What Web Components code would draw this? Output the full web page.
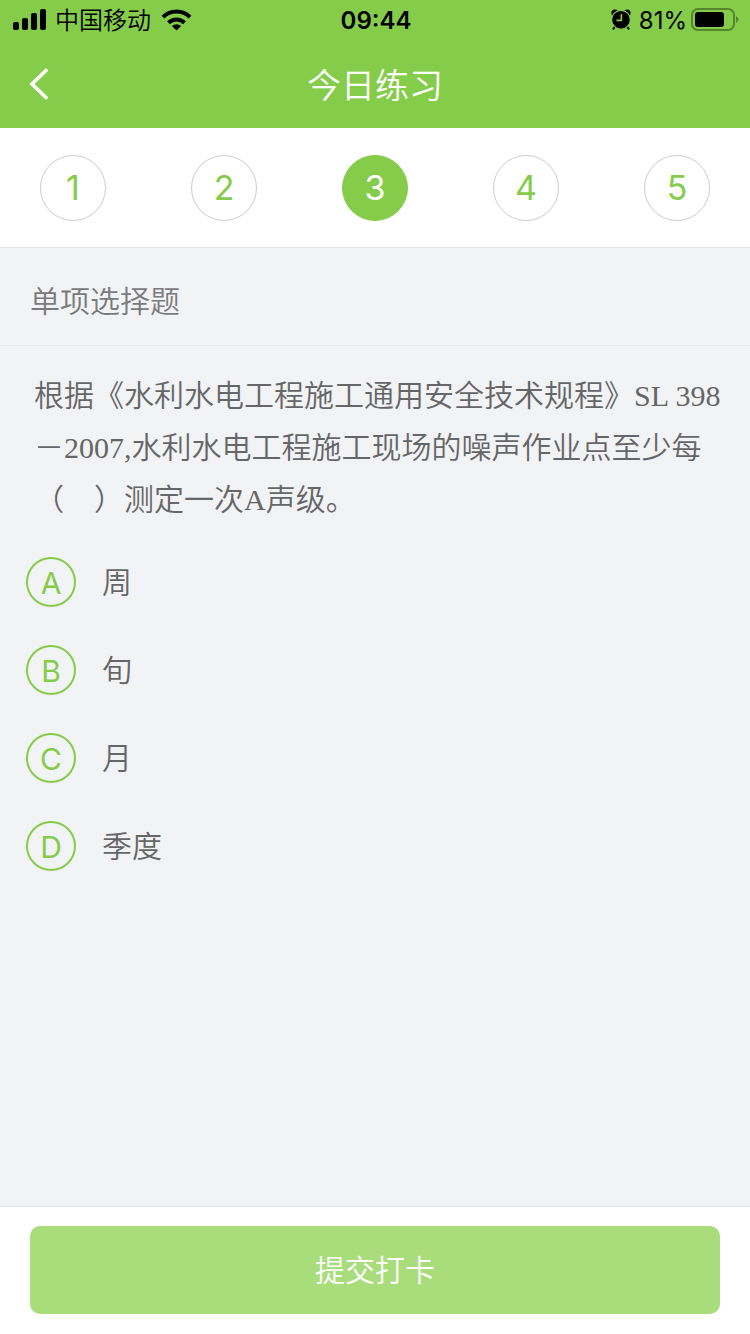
<!DOCTYPE html>
<html lang="zh-CN">
<head>
<meta charset="utf-8">
<meta name="viewport" content="width=device-width, initial-scale=1">
<title>今日练习</title>
<style>
  html { --green: #86cc4b; --grey: #656668; }
  body { margin: 0; font-family: Inter, "Noto Sans CJK SC", sans-serif; font-weight: 350; color: var(--grey); }
</style>
</head>
<body>
<practice-page></practice-page>

<script>
function define(name, html, setup) {
  const template = document.createElement("template");
  template.innerHTML = html;
  customElements.define(name, class extends HTMLElement {
    connectedCallback() {
      if (this.shadowRoot) return;
      const root = this.attachShadow({ mode: "open" });
      root.append(template.content.cloneNode(true));
      if (setup) setup(this, root);
    }
  });
}

define("status-bar", `
<style>
  :host { display: grid; grid-template-columns: 1fr auto 1fr; align-items: center; height: 40px; padding: 0 11px 0 13px; background: var(--green); color: #000; font-size: 24px; line-height: 40px; }
  svg { display: block; flex: none; }
  .side { display: flex; align-items: center; }
  .left { gap: 9px; }
  .right { justify-content: flex-end; gap: 4px; font-weight: 400; }
  .alarm { margin-right: 4px; }
  span, time { padding-top: 2px; line-height: 38px; }
  time { font-weight: 600; }
</style>
<div class="side left">
  <svg width="33" height="22" viewBox="0 0 33 22" role="img" aria-label="信号">
    <rect x="0" y="13" width="6" height="8" rx="2"/><rect x="9" y="9" width="6" height="12" rx="2"/><rect x="18" y="4" width="6" height="17" rx="2"/><rect x="27" y="0" width="6" height="21" rx="2"/>
  </svg>
  <span>中国移动</span>
  <svg width="32" height="22" viewBox="0 0 32 22" role="img" aria-label="无线网络">
    <g fill="none" stroke="#000" stroke-width="4"><path d="M3 8.2A19 19 0 0 1 30 8.2"/><path d="M8.5 13.8A11.5 11.5 0 0 1 24.5 13.8"/></g>
    <path d="M16.5 21.5L11.9 17A6.6 6.6 0 0 1 21.1 17Z"/>
  </svg>
</div>
<time>09:44</time>
<div class="side right">
  <svg class="alarm" width="20" height="22" viewBox="0 0 20 22" role="img" aria-label="闹钟">
    <circle cx="4" cy="4" r="3.6"/><circle cx="16" cy="4" r="3.6"/>
    <path d="M4 17.5L2.4 19.8M16 17.5L17.6 19.8" stroke="#000" stroke-width="2" stroke-linecap="round"/>
    <circle cx="10" cy="10.8" r="9.4" stroke="#86cc4b" stroke-width="1.2"/>
    <path d="M10.4 5V11.4H5.5" fill="none" stroke="#86cc4b" stroke-width="1.6"/>
  </svg>
  <span>81%</span>
  <svg width="48" height="24" viewBox="0 0 48 24" role="img" aria-label="电池">
    <rect x="1" y="1" width="42" height="21" rx="6" fill="none" stroke="#55862d" stroke-width="2"/>
    <rect x="4" y="4" width="29" height="15" rx="3"/>
    <path d="M45 8Q50 11.5 45 15Z" fill="#55862d"/>
  </svg>
</div>`);

define("nav-bar", `
<style>
  :host { display: grid; grid-template-columns: 78px 1fr 78px; align-items: center; height: 88px; background: var(--green); color: #fff; }
  button { display: grid; place-items: center; height: 88px; padding: 0; border: 0; background: none; color: inherit; }
  h1 { margin: 0; padding-top: 4px; font-size: 34px; line-height: 48px; font-weight: inherit; text-align: center; }
</style>
<button type="button" aria-label="返回">
  <svg width="20" height="32" viewBox="0 0 20 32"><path d="M17 2.5L3 16L17 29.5" fill="none" stroke="#fff" stroke-width="3.6" stroke-linecap="round"/></svg>
</button>
<h1><slot></slot></h1>`);

define("question-steps", `
<style>
  :host { display: flex; justify-content: space-between; padding: 27px 40px 26px; border-bottom: 1px solid #e3e4e5; background: #fff; }
  button { box-sizing: border-box; width: 66px; height: 66px; padding: 0; border: 1px solid #ccc; border-radius: 50%; background: #fff; color: var(--green); font: 400 34px/64px Inter, sans-serif; }
  button[aria-current] { border-color: var(--green); background: var(--green); color: #fff; }
</style>`, (host, root) => {
  const count = Number(host.getAttribute("count"));
  for (let i = 1; i <= count; i++) {
    const button = document.createElement("button");
    button.type = "button";
    button.textContent = i;
    if (String(i) === host.getAttribute("current")) button.setAttribute("aria-current", "step");
    root.append(button);
  }
});

define("section-title", `
<style>
  :host { display: block; padding: 29px 30px 20px; border-bottom: 1px solid #e8e9eb; color: #7a7b7d; }
  h2 { margin: 0; font-size: 30px; line-height: 48px; font-weight: inherit; }
</style>
<h2><slot></slot></h2>`);

define("question-text", `
<style>
  :host { display: block; padding: 24px 24px 12px 34px; }
  p { margin: 0; font: 350 30px/52px "Liberation Serif", "Noto Sans CJK SC", serif; }
</style>
<p><slot></slot></p>`);

define("answer-options", `
<style>
  :host { display: block; }
  fieldset { margin: 0; padding: 0; border: 0; min-width: 0; }
  label { display: grid; grid-template-columns: 50px 1fr; align-items: center; column-gap: 26px; height: 88px; padding: 0 26px; font-size: 30px; line-height: 48px; }
  input { grid-area: 1 / 1; appearance: none; box-sizing: border-box; width: 50px; height: 50px; margin: 0; border: 2px solid var(--green); border-radius: 50%; }
  .letter { grid-area: 1 / 1; padding-top: 2px; font-weight: 400; text-align: center; color: var(--green); }
  input:checked { background: var(--green); }
  input:checked + .letter { color: #fff; }
</style>
<fieldset aria-label="选项"></fieldset>`, (host, root) => {
  const set = root.querySelector("fieldset");
  host.getAttribute("options").split(",").forEach((text, i) => {
    const letter = "ABCD"[i];
    const label = document.createElement("label");
    label.innerHTML = `<input type="radio" name="answer" value="${letter}"><span class="letter">${letter}</span><span>${text}</span>`;
    set.append(label);
  });
});

define("submit-bar", `
<style>
  :host { display: block; padding: 19px 30px 20px; border-top: 1px solid #e3e4e5; background: #fff; }
  button { display: block; width: 100%; height: 88px; padding: 0; border: 0; border-radius: 10px; background: #a9dc7a; color: #fff; font-family: inherit; font-size: 30px; line-height: 48px; font-weight: inherit; }
</style>
<button type="button"><slot></slot></button>`);

define("practice-page", `
<style>
  :host { display: flex; flex-direction: column; min-height: 100vh; background: #f2f3f5; }
  main { flex: 1; }
</style>
<status-bar></status-bar>
<nav-bar>今日练习</nav-bar>
<question-steps count="5" current="3"></question-steps>
<main>
  <section-title>单项选择题</section-title>
  <question-text>根据《水利水电工程施工通用安全技术规程》SL 398－2007,水利水电工程施工现场的噪声作业点至少每（　）测定一次A声级。</question-text>
  <answer-options options="周,旬,月,季度"></answer-options>
</main>
<submit-bar>提交打卡</submit-bar>`);
</script>
</body>
</html>
